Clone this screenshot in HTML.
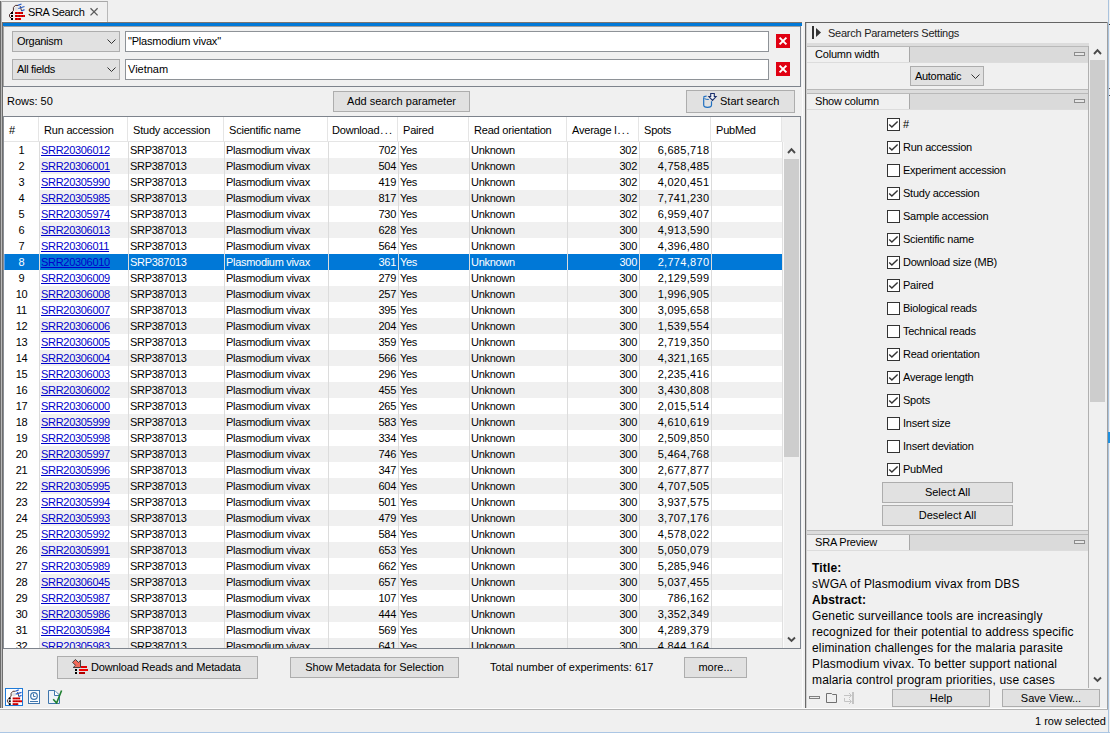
<!DOCTYPE html><html><head><meta charset="utf-8"><style>
*{margin:0;padding:0;box-sizing:border-box}
html,body{width:1110px;height:733px;overflow:hidden;background:#f0f0f0;font-family:"Liberation Sans",sans-serif;font-size:11px;color:#000;position:relative}
.a{position:absolute}
.t{position:absolute;white-space:nowrap;line-height:13px}
.btn{position:absolute;background:#e1e1e1;border:1px solid #adadad}
.btn span{position:absolute;left:0;right:0;text-align:center;white-space:nowrap}
.fld{position:absolute;background:#fff;border:1px solid #8e9297}
.combo{position:absolute;background:#e1e1e1;border:1px solid #adadad}
.row{position:absolute;left:4px;width:778px;height:16px}
.c{position:absolute;top:0;height:16px;line-height:16px;white-space:nowrap;overflow:hidden;letter-spacing:-0.3px}
.cb{position:absolute;width:13px;height:13px;border:1px solid #333;background:#fff}
.lbl{position:absolute;white-space:nowrap;line-height:13px;letter-spacing:-0.25px}
.sh{position:absolute;left:807px;width:281px;height:17px;background:#dadada;border-top:1px solid #b9b9b9;border-bottom:1px solid #dcdcdc}
.sh .nm{position:absolute;left:0;top:0;width:103px;height:15px;background:#f0f0f0;border-right:1px solid #a8a8a8}
.sh .nm span{position:absolute;left:8px;top:1px;white-space:nowrap;line-height:13px;letter-spacing:-0.2px}
.sh .mn{position:absolute;left:267px;top:5px;width:11px;height:4px;border:1px solid #8c8c8c;background:#e6e6e6}
</style></head><body>
<div class="a" style="left:0;top:1px;width:2px;height:708px;background:#6a6a6a"></div>
<div class="a" style="left:1px;top:1px;width:1px;height:708px;background:#b9b9b9"></div>
<div class="a" style="left:2px;top:1px;width:106px;height:22px;background:#f0f0f0;border-top:1px solid #a8a8a8;border-right:1px solid #b8b8b8"></div>
<div class="a" style="left:2px;top:21px;width:105px;height:1px;background:#fafafa"></div>
<svg class="a" style="left:8px;top:3px" width="18" height="18" viewBox="0 0 18 18"><defs><pattern id="rp" width="3" height="2" patternUnits="userSpaceOnUse"><rect width="3" height="2" fill="#f00000"/><rect x="1.6" width="1.4" height="2" fill="#a80000"/></pattern></defs>
<circle cx="8.4" cy="5.8" r="2.1" fill="#e2e2e2"/>
<path d="M10 2.4 H7.3 L5.4 4.5 V7.7 L1.5 11.5 V13.7 L3.5 15.4" fill="none" stroke="#4a2a2a" stroke-width="1"/>
<rect x="3" y="9" width="2" height="2" fill="#000"/><rect x="3" y="12" width="2" height="2" fill="#000"/><rect x="3" y="15" width="2" height="2" fill="#000"/>
<rect x="7" y="9" width="8" height="2" fill="url(#rp)"/>
<rect x="7" y="12" width="10" height="2" fill="url(#rp)"/>
<rect x="7" y="15" width="6" height="2" fill="url(#rp)"/>
<path d="M12.2 3.1 L13.6 8" stroke="#4a3030" stroke-width="1"/>
<path d="M10 2.4 L13.5 1 M10.3 5.5 L16.5 3.5 M13.5 8 L16.5 6.7" stroke="#2a5ec8" stroke-width="1.3"/></svg>
<div class="t" style="left:28px;top:6px;letter-spacing:-0.35px;color:#000">SRA Search</div>
<svg class="a" style="left:89px;top:7px" width="10" height="10" viewBox="0 0 10 10"><path d="M1.5 1.3 L8.6 8.4 M8.6 1.3 L1.5 8.4" stroke="#5a5a5a" stroke-width="1.3"/></svg>
<div class="a" style="left:2px;top:22px;width:800px;height:1px;background:#7a7470"></div>
<div class="a" style="left:3px;top:23px;width:799px;height:3px;background:#0078d7"></div>
<div class="a" style="left:2px;top:22px;width:1px;height:687px;background:#6e6e6e"></div>
<div class="a" style="left:3px;top:26px;width:1px;height:61px;background:#a6a6a6"></div>
<div class="a" style="left:800px;top:26px;width:1px;height:61px;background:#7d858f"></div>
<div class="a" style="left:800px;top:116px;width:1px;height:533px;background:#7d858f"></div>
<div class="a" style="left:802px;top:26px;width:1px;height:682px;background:#fbfbfb"></div>
<div class="a" style="left:4px;top:26px;width:796px;height:1px;background:#a0a0a0"></div>
<div class="a" style="left:3px;top:86px;width:798px;height:1px;background:#7d838c"></div>
<div class="combo" style="left:12px;top:31px;width:108px;height:21px"></div><div class="t" style="left:17px;top:35px;letter-spacing:-0.3px">Organism</div><svg class="a" style="left:107px;top:39px" width="9" height="6" viewBox="0 0 9 6"><path d="M0.5 0.5 L4.5 4.5 L8.5 0.5" fill="none" stroke="#333" stroke-width="1"/></svg>
<div class="fld" style="left:125px;top:31px;width:644px;height:21px"></div>
<div class="t" style="left:128px;top:35px;letter-spacing:-0.2px">"Plasmodium vivax"</div>
<div class="combo" style="left:12px;top:59px;width:108px;height:21px"></div><div class="t" style="left:17px;top:63px;letter-spacing:-0.3px">All fields</div><svg class="a" style="left:107px;top:67px" width="9" height="6" viewBox="0 0 9 6"><path d="M0.5 0.5 L4.5 4.5 L8.5 0.5" fill="none" stroke="#333" stroke-width="1"/></svg>
<div class="fld" style="left:125px;top:59px;width:644px;height:21px"></div>
<div class="t" style="left:128px;top:63px">Vietnam</div>
<svg class="a" style="left:776px;top:34px" width="14" height="14" viewBox="0 0 14 14"><rect width="14" height="14" fill="#e00012"/><path d="M3.6 3.6 L10.4 10.4 M10.4 3.6 L3.6 10.4" stroke="#fff" stroke-width="2"/></svg>
<svg class="a" style="left:776px;top:62px" width="14" height="14" viewBox="0 0 14 14"><rect width="14" height="14" fill="#e00012"/><path d="M3.6 3.6 L10.4 10.4 M10.4 3.6 L3.6 10.4" stroke="#fff" stroke-width="2"/></svg>
<div class="t" style="left:7px;top:95px">Rows: 50</div>
<div class="btn" style="left:333px;top:91px;width:137px;height:21px"><span style="top:3px">Add search parameter</span></div>
<div class="btn" style="left:686px;top:90px;width:109px;height:23px"><span style="top:4px;left:33px;text-align:left">Start search</span></div>
<svg class="a" style="left:702px;top:93px" width="16" height="16" viewBox="0 0 16 16">
<path d="M1.7 4.5 V12 Q1.7 14.3 5.5 14.3 Q9.5 14.3 9.5 12 V8.2" fill="none" stroke="#1f6fc0" stroke-width="1.2"/>
<path d="M1.7 4.5 Q1.7 3.2 4.6 3.2" fill="none" stroke="#1f6fc0" stroke-width="1.2"/>
<path d="M2.5 5.6 Q3.6 6.5 6.8 6.5" fill="none" stroke="#1f6fc0" stroke-width="1"/>
<path d="M8.7 0.5 H12.3 V3.5 H14.1 L10.5 7.4 L6.9 3.5 H8.7 Z" fill="#eef0f4" stroke="#1a2e6c" stroke-width="1.1"/>
</svg>
<div class="a" style="left:3px;top:116px;width:798px;height:1px;background:#7d838c"></div>
<div class="a" style="left:3px;top:116px;width:1px;height:533px;background:#8a8f96"></div>
<div class="a" style="left:3px;top:648px;width:798px;height:1px;background:#7d838c"></div>
<div class="a" style="left:4px;top:117px;width:778px;height:25px;background:#fff"></div>
<div class="t" style="left:9px;top:124px;letter-spacing:-0.2px">#</div>
<div class="t" style="left:44px;top:124px;letter-spacing:-0.2px">Run accession</div>
<div class="t" style="left:133px;top:124px;letter-spacing:-0.2px">Study accession</div>
<div class="t" style="left:229px;top:124px;letter-spacing:-0.2px">Scientific name</div>
<div class="t" style="left:332px;top:124px;letter-spacing:-0.2px">Download<span style='letter-spacing:1.3px;margin-left:1px'>...</span></div>
<div class="t" style="left:403px;top:124px;letter-spacing:-0.2px">Paired</div>
<div class="t" style="left:474px;top:124px;letter-spacing:-0.2px">Read orientation</div>
<div class="t" style="left:572px;top:124px;letter-spacing:-0.2px">Average l<span style='letter-spacing:1.3px;margin-left:1px'>...</span></div>
<div class="t" style="left:644px;top:124px;letter-spacing:-0.2px">Spots</div>
<div class="t" style="left:716px;top:124px;letter-spacing:-0.2px">PubMed</div>
<div class="a" style="left:38px;top:117px;width:1px;height:24px;background:#e5e5e5"></div>
<div class="a" style="left:127px;top:117px;width:1px;height:24px;background:#e5e5e5"></div>
<div class="a" style="left:223px;top:117px;width:1px;height:24px;background:#e5e5e5"></div>
<div class="a" style="left:327px;top:117px;width:1px;height:24px;background:#e5e5e5"></div>
<div class="a" style="left:397px;top:117px;width:1px;height:24px;background:#e5e5e5"></div>
<div class="a" style="left:468px;top:117px;width:1px;height:24px;background:#e5e5e5"></div>
<div class="a" style="left:566px;top:117px;width:1px;height:24px;background:#e5e5e5"></div>
<div class="a" style="left:638px;top:117px;width:1px;height:24px;background:#e5e5e5"></div>
<div class="a" style="left:710px;top:117px;width:1px;height:24px;background:#e5e5e5"></div>
<div class="a" style="left:781px;top:117px;width:1px;height:24px;background:#e5e5e5"></div>
<div class="a" style="left:4px;top:141px;width:778px;height:1px;background:#e5e5e5"></div>
<div class="a" style="left:4px;top:142px;width:778px;height:506px;overflow:hidden">
<div class="row" style="left:0;top:0px;background:#fff;color:#000">
<div class="a" style="left:0;top:0;width:35px;height:16px;background:#fff"></div>
<div class="c" style="left:0px;width:35px;text-align:center">1</div>
<div class="c" style="left:36px;width:88px;padding-left:1px"><u style="color:#0000cc">SRR20306012</u></div>
<div class="c" style="left:125px;width:95px;padding-left:1px">SRP387013</div>
<div class="c" style="left:221px;width:103px;padding-left:1px">Plasmodium vivax</div>
<div class="c" style="left:325px;width:69px;text-align:right;padding-right:2px">702</div>
<div class="c" style="left:395px;width:70px;padding-left:1px">Yes</div>
<div class="c" style="left:466px;width:97px;padding-left:1px">Unknown</div>
<div class="c" style="left:564px;width:71px;text-align:right;padding-right:2px">302</div>
<div class="c" style="left:636px;width:71px;text-align:right;padding-right:2px;letter-spacing:0.3px;padding-right:1.7px">6,685,718</div>
</div>
<div class="row" style="left:0;top:16px;background:#f0f0f0;color:#000">
<div class="a" style="left:0;top:0;width:35px;height:16px;background:#fff"></div>
<div class="c" style="left:0px;width:35px;text-align:center">2</div>
<div class="c" style="left:36px;width:88px;padding-left:1px"><u style="color:#0000cc">SRR20306001</u></div>
<div class="c" style="left:125px;width:95px;padding-left:1px">SRP387013</div>
<div class="c" style="left:221px;width:103px;padding-left:1px">Plasmodium vivax</div>
<div class="c" style="left:325px;width:69px;text-align:right;padding-right:2px">504</div>
<div class="c" style="left:395px;width:70px;padding-left:1px">Yes</div>
<div class="c" style="left:466px;width:97px;padding-left:1px">Unknown</div>
<div class="c" style="left:564px;width:71px;text-align:right;padding-right:2px">302</div>
<div class="c" style="left:636px;width:71px;text-align:right;padding-right:2px;letter-spacing:0.3px;padding-right:1.7px">4,758,485</div>
</div>
<div class="row" style="left:0;top:32px;background:#fff;color:#000">
<div class="a" style="left:0;top:0;width:35px;height:16px;background:#fff"></div>
<div class="c" style="left:0px;width:35px;text-align:center">3</div>
<div class="c" style="left:36px;width:88px;padding-left:1px"><u style="color:#0000cc">SRR20305990</u></div>
<div class="c" style="left:125px;width:95px;padding-left:1px">SRP387013</div>
<div class="c" style="left:221px;width:103px;padding-left:1px">Plasmodium vivax</div>
<div class="c" style="left:325px;width:69px;text-align:right;padding-right:2px">419</div>
<div class="c" style="left:395px;width:70px;padding-left:1px">Yes</div>
<div class="c" style="left:466px;width:97px;padding-left:1px">Unknown</div>
<div class="c" style="left:564px;width:71px;text-align:right;padding-right:2px">302</div>
<div class="c" style="left:636px;width:71px;text-align:right;padding-right:2px;letter-spacing:0.3px;padding-right:1.7px">4,020,451</div>
</div>
<div class="row" style="left:0;top:48px;background:#f0f0f0;color:#000">
<div class="a" style="left:0;top:0;width:35px;height:16px;background:#fff"></div>
<div class="c" style="left:0px;width:35px;text-align:center">4</div>
<div class="c" style="left:36px;width:88px;padding-left:1px"><u style="color:#0000cc">SRR20305985</u></div>
<div class="c" style="left:125px;width:95px;padding-left:1px">SRP387013</div>
<div class="c" style="left:221px;width:103px;padding-left:1px">Plasmodium vivax</div>
<div class="c" style="left:325px;width:69px;text-align:right;padding-right:2px">817</div>
<div class="c" style="left:395px;width:70px;padding-left:1px">Yes</div>
<div class="c" style="left:466px;width:97px;padding-left:1px">Unknown</div>
<div class="c" style="left:564px;width:71px;text-align:right;padding-right:2px">302</div>
<div class="c" style="left:636px;width:71px;text-align:right;padding-right:2px;letter-spacing:0.3px;padding-right:1.7px">7,741,230</div>
</div>
<div class="row" style="left:0;top:64px;background:#fff;color:#000">
<div class="a" style="left:0;top:0;width:35px;height:16px;background:#fff"></div>
<div class="c" style="left:0px;width:35px;text-align:center">5</div>
<div class="c" style="left:36px;width:88px;padding-left:1px"><u style="color:#0000cc">SRR20305974</u></div>
<div class="c" style="left:125px;width:95px;padding-left:1px">SRP387013</div>
<div class="c" style="left:221px;width:103px;padding-left:1px">Plasmodium vivax</div>
<div class="c" style="left:325px;width:69px;text-align:right;padding-right:2px">730</div>
<div class="c" style="left:395px;width:70px;padding-left:1px">Yes</div>
<div class="c" style="left:466px;width:97px;padding-left:1px">Unknown</div>
<div class="c" style="left:564px;width:71px;text-align:right;padding-right:2px">302</div>
<div class="c" style="left:636px;width:71px;text-align:right;padding-right:2px;letter-spacing:0.3px;padding-right:1.7px">6,959,407</div>
</div>
<div class="row" style="left:0;top:80px;background:#f0f0f0;color:#000">
<div class="a" style="left:0;top:0;width:35px;height:16px;background:#fff"></div>
<div class="c" style="left:0px;width:35px;text-align:center">6</div>
<div class="c" style="left:36px;width:88px;padding-left:1px"><u style="color:#0000cc">SRR20306013</u></div>
<div class="c" style="left:125px;width:95px;padding-left:1px">SRP387013</div>
<div class="c" style="left:221px;width:103px;padding-left:1px">Plasmodium vivax</div>
<div class="c" style="left:325px;width:69px;text-align:right;padding-right:2px">628</div>
<div class="c" style="left:395px;width:70px;padding-left:1px">Yes</div>
<div class="c" style="left:466px;width:97px;padding-left:1px">Unknown</div>
<div class="c" style="left:564px;width:71px;text-align:right;padding-right:2px">300</div>
<div class="c" style="left:636px;width:71px;text-align:right;padding-right:2px;letter-spacing:0.3px;padding-right:1.7px">4,913,590</div>
</div>
<div class="row" style="left:0;top:96px;background:#fff;color:#000">
<div class="a" style="left:0;top:0;width:35px;height:16px;background:#fff"></div>
<div class="c" style="left:0px;width:35px;text-align:center">7</div>
<div class="c" style="left:36px;width:88px;padding-left:1px"><u style="color:#0000cc">SRR20306011</u></div>
<div class="c" style="left:125px;width:95px;padding-left:1px">SRP387013</div>
<div class="c" style="left:221px;width:103px;padding-left:1px">Plasmodium vivax</div>
<div class="c" style="left:325px;width:69px;text-align:right;padding-right:2px">564</div>
<div class="c" style="left:395px;width:70px;padding-left:1px">Yes</div>
<div class="c" style="left:466px;width:97px;padding-left:1px">Unknown</div>
<div class="c" style="left:564px;width:71px;text-align:right;padding-right:2px">300</div>
<div class="c" style="left:636px;width:71px;text-align:right;padding-right:2px;letter-spacing:0.3px;padding-right:1.7px">4,396,480</div>
</div>
<div class="row" style="left:0;top:112px;background:#0078d7;color:#fff">
<div class="c" style="left:0px;width:35px;text-align:center">8</div>
<div class="c" style="left:36px;width:88px;padding-left:1px"><u style="color:#0000cc">SRR20306010</u></div>
<div class="c" style="left:125px;width:95px;padding-left:1px">SRP387013</div>
<div class="c" style="left:221px;width:103px;padding-left:1px">Plasmodium vivax</div>
<div class="c" style="left:325px;width:69px;text-align:right;padding-right:2px">361</div>
<div class="c" style="left:395px;width:70px;padding-left:1px">Yes</div>
<div class="c" style="left:466px;width:97px;padding-left:1px">Unknown</div>
<div class="c" style="left:564px;width:71px;text-align:right;padding-right:2px">300</div>
<div class="c" style="left:636px;width:71px;text-align:right;padding-right:2px;letter-spacing:0.3px;padding-right:1.7px">2,774,870</div>
</div>
<div class="row" style="left:0;top:128px;background:#fff;color:#000">
<div class="a" style="left:0;top:0;width:35px;height:16px;background:#fff"></div>
<div class="c" style="left:0px;width:35px;text-align:center">9</div>
<div class="c" style="left:36px;width:88px;padding-left:1px"><u style="color:#0000cc">SRR20306009</u></div>
<div class="c" style="left:125px;width:95px;padding-left:1px">SRP387013</div>
<div class="c" style="left:221px;width:103px;padding-left:1px">Plasmodium vivax</div>
<div class="c" style="left:325px;width:69px;text-align:right;padding-right:2px">279</div>
<div class="c" style="left:395px;width:70px;padding-left:1px">Yes</div>
<div class="c" style="left:466px;width:97px;padding-left:1px">Unknown</div>
<div class="c" style="left:564px;width:71px;text-align:right;padding-right:2px">300</div>
<div class="c" style="left:636px;width:71px;text-align:right;padding-right:2px;letter-spacing:0.3px;padding-right:1.7px">2,129,599</div>
</div>
<div class="row" style="left:0;top:144px;background:#f0f0f0;color:#000">
<div class="a" style="left:0;top:0;width:35px;height:16px;background:#fff"></div>
<div class="c" style="left:0px;width:35px;text-align:center">10</div>
<div class="c" style="left:36px;width:88px;padding-left:1px"><u style="color:#0000cc">SRR20306008</u></div>
<div class="c" style="left:125px;width:95px;padding-left:1px">SRP387013</div>
<div class="c" style="left:221px;width:103px;padding-left:1px">Plasmodium vivax</div>
<div class="c" style="left:325px;width:69px;text-align:right;padding-right:2px">257</div>
<div class="c" style="left:395px;width:70px;padding-left:1px">Yes</div>
<div class="c" style="left:466px;width:97px;padding-left:1px">Unknown</div>
<div class="c" style="left:564px;width:71px;text-align:right;padding-right:2px">300</div>
<div class="c" style="left:636px;width:71px;text-align:right;padding-right:2px;letter-spacing:0.3px;padding-right:1.7px">1,996,905</div>
</div>
<div class="row" style="left:0;top:160px;background:#fff;color:#000">
<div class="a" style="left:0;top:0;width:35px;height:16px;background:#fff"></div>
<div class="c" style="left:0px;width:35px;text-align:center">11</div>
<div class="c" style="left:36px;width:88px;padding-left:1px"><u style="color:#0000cc">SRR20306007</u></div>
<div class="c" style="left:125px;width:95px;padding-left:1px">SRP387013</div>
<div class="c" style="left:221px;width:103px;padding-left:1px">Plasmodium vivax</div>
<div class="c" style="left:325px;width:69px;text-align:right;padding-right:2px">395</div>
<div class="c" style="left:395px;width:70px;padding-left:1px">Yes</div>
<div class="c" style="left:466px;width:97px;padding-left:1px">Unknown</div>
<div class="c" style="left:564px;width:71px;text-align:right;padding-right:2px">300</div>
<div class="c" style="left:636px;width:71px;text-align:right;padding-right:2px;letter-spacing:0.3px;padding-right:1.7px">3,095,658</div>
</div>
<div class="row" style="left:0;top:176px;background:#f0f0f0;color:#000">
<div class="a" style="left:0;top:0;width:35px;height:16px;background:#fff"></div>
<div class="c" style="left:0px;width:35px;text-align:center">12</div>
<div class="c" style="left:36px;width:88px;padding-left:1px"><u style="color:#0000cc">SRR20306006</u></div>
<div class="c" style="left:125px;width:95px;padding-left:1px">SRP387013</div>
<div class="c" style="left:221px;width:103px;padding-left:1px">Plasmodium vivax</div>
<div class="c" style="left:325px;width:69px;text-align:right;padding-right:2px">204</div>
<div class="c" style="left:395px;width:70px;padding-left:1px">Yes</div>
<div class="c" style="left:466px;width:97px;padding-left:1px">Unknown</div>
<div class="c" style="left:564px;width:71px;text-align:right;padding-right:2px">300</div>
<div class="c" style="left:636px;width:71px;text-align:right;padding-right:2px;letter-spacing:0.3px;padding-right:1.7px">1,539,554</div>
</div>
<div class="row" style="left:0;top:192px;background:#fff;color:#000">
<div class="a" style="left:0;top:0;width:35px;height:16px;background:#fff"></div>
<div class="c" style="left:0px;width:35px;text-align:center">13</div>
<div class="c" style="left:36px;width:88px;padding-left:1px"><u style="color:#0000cc">SRR20306005</u></div>
<div class="c" style="left:125px;width:95px;padding-left:1px">SRP387013</div>
<div class="c" style="left:221px;width:103px;padding-left:1px">Plasmodium vivax</div>
<div class="c" style="left:325px;width:69px;text-align:right;padding-right:2px">359</div>
<div class="c" style="left:395px;width:70px;padding-left:1px">Yes</div>
<div class="c" style="left:466px;width:97px;padding-left:1px">Unknown</div>
<div class="c" style="left:564px;width:71px;text-align:right;padding-right:2px">300</div>
<div class="c" style="left:636px;width:71px;text-align:right;padding-right:2px;letter-spacing:0.3px;padding-right:1.7px">2,719,350</div>
</div>
<div class="row" style="left:0;top:208px;background:#f0f0f0;color:#000">
<div class="a" style="left:0;top:0;width:35px;height:16px;background:#fff"></div>
<div class="c" style="left:0px;width:35px;text-align:center">14</div>
<div class="c" style="left:36px;width:88px;padding-left:1px"><u style="color:#0000cc">SRR20306004</u></div>
<div class="c" style="left:125px;width:95px;padding-left:1px">SRP387013</div>
<div class="c" style="left:221px;width:103px;padding-left:1px">Plasmodium vivax</div>
<div class="c" style="left:325px;width:69px;text-align:right;padding-right:2px">566</div>
<div class="c" style="left:395px;width:70px;padding-left:1px">Yes</div>
<div class="c" style="left:466px;width:97px;padding-left:1px">Unknown</div>
<div class="c" style="left:564px;width:71px;text-align:right;padding-right:2px">300</div>
<div class="c" style="left:636px;width:71px;text-align:right;padding-right:2px;letter-spacing:0.3px;padding-right:1.7px">4,321,165</div>
</div>
<div class="row" style="left:0;top:224px;background:#fff;color:#000">
<div class="a" style="left:0;top:0;width:35px;height:16px;background:#fff"></div>
<div class="c" style="left:0px;width:35px;text-align:center">15</div>
<div class="c" style="left:36px;width:88px;padding-left:1px"><u style="color:#0000cc">SRR20306003</u></div>
<div class="c" style="left:125px;width:95px;padding-left:1px">SRP387013</div>
<div class="c" style="left:221px;width:103px;padding-left:1px">Plasmodium vivax</div>
<div class="c" style="left:325px;width:69px;text-align:right;padding-right:2px">296</div>
<div class="c" style="left:395px;width:70px;padding-left:1px">Yes</div>
<div class="c" style="left:466px;width:97px;padding-left:1px">Unknown</div>
<div class="c" style="left:564px;width:71px;text-align:right;padding-right:2px">300</div>
<div class="c" style="left:636px;width:71px;text-align:right;padding-right:2px;letter-spacing:0.3px;padding-right:1.7px">2,235,416</div>
</div>
<div class="row" style="left:0;top:240px;background:#f0f0f0;color:#000">
<div class="a" style="left:0;top:0;width:35px;height:16px;background:#fff"></div>
<div class="c" style="left:0px;width:35px;text-align:center">16</div>
<div class="c" style="left:36px;width:88px;padding-left:1px"><u style="color:#0000cc">SRR20306002</u></div>
<div class="c" style="left:125px;width:95px;padding-left:1px">SRP387013</div>
<div class="c" style="left:221px;width:103px;padding-left:1px">Plasmodium vivax</div>
<div class="c" style="left:325px;width:69px;text-align:right;padding-right:2px">455</div>
<div class="c" style="left:395px;width:70px;padding-left:1px">Yes</div>
<div class="c" style="left:466px;width:97px;padding-left:1px">Unknown</div>
<div class="c" style="left:564px;width:71px;text-align:right;padding-right:2px">300</div>
<div class="c" style="left:636px;width:71px;text-align:right;padding-right:2px;letter-spacing:0.3px;padding-right:1.7px">3,430,808</div>
</div>
<div class="row" style="left:0;top:256px;background:#fff;color:#000">
<div class="a" style="left:0;top:0;width:35px;height:16px;background:#fff"></div>
<div class="c" style="left:0px;width:35px;text-align:center">17</div>
<div class="c" style="left:36px;width:88px;padding-left:1px"><u style="color:#0000cc">SRR20306000</u></div>
<div class="c" style="left:125px;width:95px;padding-left:1px">SRP387013</div>
<div class="c" style="left:221px;width:103px;padding-left:1px">Plasmodium vivax</div>
<div class="c" style="left:325px;width:69px;text-align:right;padding-right:2px">265</div>
<div class="c" style="left:395px;width:70px;padding-left:1px">Yes</div>
<div class="c" style="left:466px;width:97px;padding-left:1px">Unknown</div>
<div class="c" style="left:564px;width:71px;text-align:right;padding-right:2px">300</div>
<div class="c" style="left:636px;width:71px;text-align:right;padding-right:2px;letter-spacing:0.3px;padding-right:1.7px">2,015,514</div>
</div>
<div class="row" style="left:0;top:272px;background:#f0f0f0;color:#000">
<div class="a" style="left:0;top:0;width:35px;height:16px;background:#fff"></div>
<div class="c" style="left:0px;width:35px;text-align:center">18</div>
<div class="c" style="left:36px;width:88px;padding-left:1px"><u style="color:#0000cc">SRR20305999</u></div>
<div class="c" style="left:125px;width:95px;padding-left:1px">SRP387013</div>
<div class="c" style="left:221px;width:103px;padding-left:1px">Plasmodium vivax</div>
<div class="c" style="left:325px;width:69px;text-align:right;padding-right:2px">583</div>
<div class="c" style="left:395px;width:70px;padding-left:1px">Yes</div>
<div class="c" style="left:466px;width:97px;padding-left:1px">Unknown</div>
<div class="c" style="left:564px;width:71px;text-align:right;padding-right:2px">300</div>
<div class="c" style="left:636px;width:71px;text-align:right;padding-right:2px;letter-spacing:0.3px;padding-right:1.7px">4,610,619</div>
</div>
<div class="row" style="left:0;top:288px;background:#fff;color:#000">
<div class="a" style="left:0;top:0;width:35px;height:16px;background:#fff"></div>
<div class="c" style="left:0px;width:35px;text-align:center">19</div>
<div class="c" style="left:36px;width:88px;padding-left:1px"><u style="color:#0000cc">SRR20305998</u></div>
<div class="c" style="left:125px;width:95px;padding-left:1px">SRP387013</div>
<div class="c" style="left:221px;width:103px;padding-left:1px">Plasmodium vivax</div>
<div class="c" style="left:325px;width:69px;text-align:right;padding-right:2px">334</div>
<div class="c" style="left:395px;width:70px;padding-left:1px">Yes</div>
<div class="c" style="left:466px;width:97px;padding-left:1px">Unknown</div>
<div class="c" style="left:564px;width:71px;text-align:right;padding-right:2px">300</div>
<div class="c" style="left:636px;width:71px;text-align:right;padding-right:2px;letter-spacing:0.3px;padding-right:1.7px">2,509,850</div>
</div>
<div class="row" style="left:0;top:304px;background:#f0f0f0;color:#000">
<div class="a" style="left:0;top:0;width:35px;height:16px;background:#fff"></div>
<div class="c" style="left:0px;width:35px;text-align:center">20</div>
<div class="c" style="left:36px;width:88px;padding-left:1px"><u style="color:#0000cc">SRR20305997</u></div>
<div class="c" style="left:125px;width:95px;padding-left:1px">SRP387013</div>
<div class="c" style="left:221px;width:103px;padding-left:1px">Plasmodium vivax</div>
<div class="c" style="left:325px;width:69px;text-align:right;padding-right:2px">746</div>
<div class="c" style="left:395px;width:70px;padding-left:1px">Yes</div>
<div class="c" style="left:466px;width:97px;padding-left:1px">Unknown</div>
<div class="c" style="left:564px;width:71px;text-align:right;padding-right:2px">300</div>
<div class="c" style="left:636px;width:71px;text-align:right;padding-right:2px;letter-spacing:0.3px;padding-right:1.7px">5,464,768</div>
</div>
<div class="row" style="left:0;top:320px;background:#fff;color:#000">
<div class="a" style="left:0;top:0;width:35px;height:16px;background:#fff"></div>
<div class="c" style="left:0px;width:35px;text-align:center">21</div>
<div class="c" style="left:36px;width:88px;padding-left:1px"><u style="color:#0000cc">SRR20305996</u></div>
<div class="c" style="left:125px;width:95px;padding-left:1px">SRP387013</div>
<div class="c" style="left:221px;width:103px;padding-left:1px">Plasmodium vivax</div>
<div class="c" style="left:325px;width:69px;text-align:right;padding-right:2px">347</div>
<div class="c" style="left:395px;width:70px;padding-left:1px">Yes</div>
<div class="c" style="left:466px;width:97px;padding-left:1px">Unknown</div>
<div class="c" style="left:564px;width:71px;text-align:right;padding-right:2px">300</div>
<div class="c" style="left:636px;width:71px;text-align:right;padding-right:2px;letter-spacing:0.3px;padding-right:1.7px">2,677,877</div>
</div>
<div class="row" style="left:0;top:336px;background:#f0f0f0;color:#000">
<div class="a" style="left:0;top:0;width:35px;height:16px;background:#fff"></div>
<div class="c" style="left:0px;width:35px;text-align:center">22</div>
<div class="c" style="left:36px;width:88px;padding-left:1px"><u style="color:#0000cc">SRR20305995</u></div>
<div class="c" style="left:125px;width:95px;padding-left:1px">SRP387013</div>
<div class="c" style="left:221px;width:103px;padding-left:1px">Plasmodium vivax</div>
<div class="c" style="left:325px;width:69px;text-align:right;padding-right:2px">604</div>
<div class="c" style="left:395px;width:70px;padding-left:1px">Yes</div>
<div class="c" style="left:466px;width:97px;padding-left:1px">Unknown</div>
<div class="c" style="left:564px;width:71px;text-align:right;padding-right:2px">300</div>
<div class="c" style="left:636px;width:71px;text-align:right;padding-right:2px;letter-spacing:0.3px;padding-right:1.7px">4,707,505</div>
</div>
<div class="row" style="left:0;top:352px;background:#fff;color:#000">
<div class="a" style="left:0;top:0;width:35px;height:16px;background:#fff"></div>
<div class="c" style="left:0px;width:35px;text-align:center">23</div>
<div class="c" style="left:36px;width:88px;padding-left:1px"><u style="color:#0000cc">SRR20305994</u></div>
<div class="c" style="left:125px;width:95px;padding-left:1px">SRP387013</div>
<div class="c" style="left:221px;width:103px;padding-left:1px">Plasmodium vivax</div>
<div class="c" style="left:325px;width:69px;text-align:right;padding-right:2px">501</div>
<div class="c" style="left:395px;width:70px;padding-left:1px">Yes</div>
<div class="c" style="left:466px;width:97px;padding-left:1px">Unknown</div>
<div class="c" style="left:564px;width:71px;text-align:right;padding-right:2px">300</div>
<div class="c" style="left:636px;width:71px;text-align:right;padding-right:2px;letter-spacing:0.3px;padding-right:1.7px">3,937,575</div>
</div>
<div class="row" style="left:0;top:368px;background:#f0f0f0;color:#000">
<div class="a" style="left:0;top:0;width:35px;height:16px;background:#fff"></div>
<div class="c" style="left:0px;width:35px;text-align:center">24</div>
<div class="c" style="left:36px;width:88px;padding-left:1px"><u style="color:#0000cc">SRR20305993</u></div>
<div class="c" style="left:125px;width:95px;padding-left:1px">SRP387013</div>
<div class="c" style="left:221px;width:103px;padding-left:1px">Plasmodium vivax</div>
<div class="c" style="left:325px;width:69px;text-align:right;padding-right:2px">479</div>
<div class="c" style="left:395px;width:70px;padding-left:1px">Yes</div>
<div class="c" style="left:466px;width:97px;padding-left:1px">Unknown</div>
<div class="c" style="left:564px;width:71px;text-align:right;padding-right:2px">300</div>
<div class="c" style="left:636px;width:71px;text-align:right;padding-right:2px;letter-spacing:0.3px;padding-right:1.7px">3,707,176</div>
</div>
<div class="row" style="left:0;top:384px;background:#fff;color:#000">
<div class="a" style="left:0;top:0;width:35px;height:16px;background:#fff"></div>
<div class="c" style="left:0px;width:35px;text-align:center">25</div>
<div class="c" style="left:36px;width:88px;padding-left:1px"><u style="color:#0000cc">SRR20305992</u></div>
<div class="c" style="left:125px;width:95px;padding-left:1px">SRP387013</div>
<div class="c" style="left:221px;width:103px;padding-left:1px">Plasmodium vivax</div>
<div class="c" style="left:325px;width:69px;text-align:right;padding-right:2px">584</div>
<div class="c" style="left:395px;width:70px;padding-left:1px">Yes</div>
<div class="c" style="left:466px;width:97px;padding-left:1px">Unknown</div>
<div class="c" style="left:564px;width:71px;text-align:right;padding-right:2px">300</div>
<div class="c" style="left:636px;width:71px;text-align:right;padding-right:2px;letter-spacing:0.3px;padding-right:1.7px">4,578,022</div>
</div>
<div class="row" style="left:0;top:400px;background:#f0f0f0;color:#000">
<div class="a" style="left:0;top:0;width:35px;height:16px;background:#fff"></div>
<div class="c" style="left:0px;width:35px;text-align:center">26</div>
<div class="c" style="left:36px;width:88px;padding-left:1px"><u style="color:#0000cc">SRR20305991</u></div>
<div class="c" style="left:125px;width:95px;padding-left:1px">SRP387013</div>
<div class="c" style="left:221px;width:103px;padding-left:1px">Plasmodium vivax</div>
<div class="c" style="left:325px;width:69px;text-align:right;padding-right:2px">653</div>
<div class="c" style="left:395px;width:70px;padding-left:1px">Yes</div>
<div class="c" style="left:466px;width:97px;padding-left:1px">Unknown</div>
<div class="c" style="left:564px;width:71px;text-align:right;padding-right:2px">300</div>
<div class="c" style="left:636px;width:71px;text-align:right;padding-right:2px;letter-spacing:0.3px;padding-right:1.7px">5,050,079</div>
</div>
<div class="row" style="left:0;top:416px;background:#fff;color:#000">
<div class="a" style="left:0;top:0;width:35px;height:16px;background:#fff"></div>
<div class="c" style="left:0px;width:35px;text-align:center">27</div>
<div class="c" style="left:36px;width:88px;padding-left:1px"><u style="color:#0000cc">SRR20305989</u></div>
<div class="c" style="left:125px;width:95px;padding-left:1px">SRP387013</div>
<div class="c" style="left:221px;width:103px;padding-left:1px">Plasmodium vivax</div>
<div class="c" style="left:325px;width:69px;text-align:right;padding-right:2px">662</div>
<div class="c" style="left:395px;width:70px;padding-left:1px">Yes</div>
<div class="c" style="left:466px;width:97px;padding-left:1px">Unknown</div>
<div class="c" style="left:564px;width:71px;text-align:right;padding-right:2px">300</div>
<div class="c" style="left:636px;width:71px;text-align:right;padding-right:2px;letter-spacing:0.3px;padding-right:1.7px">5,285,946</div>
</div>
<div class="row" style="left:0;top:432px;background:#f0f0f0;color:#000">
<div class="a" style="left:0;top:0;width:35px;height:16px;background:#fff"></div>
<div class="c" style="left:0px;width:35px;text-align:center">28</div>
<div class="c" style="left:36px;width:88px;padding-left:1px"><u style="color:#0000cc">SRR20306045</u></div>
<div class="c" style="left:125px;width:95px;padding-left:1px">SRP387013</div>
<div class="c" style="left:221px;width:103px;padding-left:1px">Plasmodium vivax</div>
<div class="c" style="left:325px;width:69px;text-align:right;padding-right:2px">657</div>
<div class="c" style="left:395px;width:70px;padding-left:1px">Yes</div>
<div class="c" style="left:466px;width:97px;padding-left:1px">Unknown</div>
<div class="c" style="left:564px;width:71px;text-align:right;padding-right:2px">300</div>
<div class="c" style="left:636px;width:71px;text-align:right;padding-right:2px;letter-spacing:0.3px;padding-right:1.7px">5,037,455</div>
</div>
<div class="row" style="left:0;top:448px;background:#fff;color:#000">
<div class="a" style="left:0;top:0;width:35px;height:16px;background:#fff"></div>
<div class="c" style="left:0px;width:35px;text-align:center">29</div>
<div class="c" style="left:36px;width:88px;padding-left:1px"><u style="color:#0000cc">SRR20305987</u></div>
<div class="c" style="left:125px;width:95px;padding-left:1px">SRP387013</div>
<div class="c" style="left:221px;width:103px;padding-left:1px">Plasmodium vivax</div>
<div class="c" style="left:325px;width:69px;text-align:right;padding-right:2px">107</div>
<div class="c" style="left:395px;width:70px;padding-left:1px">Yes</div>
<div class="c" style="left:466px;width:97px;padding-left:1px">Unknown</div>
<div class="c" style="left:564px;width:71px;text-align:right;padding-right:2px">300</div>
<div class="c" style="left:636px;width:71px;text-align:right;padding-right:2px;letter-spacing:0.3px;padding-right:1.7px">786,162</div>
</div>
<div class="row" style="left:0;top:464px;background:#f0f0f0;color:#000">
<div class="a" style="left:0;top:0;width:35px;height:16px;background:#fff"></div>
<div class="c" style="left:0px;width:35px;text-align:center">30</div>
<div class="c" style="left:36px;width:88px;padding-left:1px"><u style="color:#0000cc">SRR20305986</u></div>
<div class="c" style="left:125px;width:95px;padding-left:1px">SRP387013</div>
<div class="c" style="left:221px;width:103px;padding-left:1px">Plasmodium vivax</div>
<div class="c" style="left:325px;width:69px;text-align:right;padding-right:2px">444</div>
<div class="c" style="left:395px;width:70px;padding-left:1px">Yes</div>
<div class="c" style="left:466px;width:97px;padding-left:1px">Unknown</div>
<div class="c" style="left:564px;width:71px;text-align:right;padding-right:2px">300</div>
<div class="c" style="left:636px;width:71px;text-align:right;padding-right:2px;letter-spacing:0.3px;padding-right:1.7px">3,352,349</div>
</div>
<div class="row" style="left:0;top:480px;background:#fff;color:#000">
<div class="a" style="left:0;top:0;width:35px;height:16px;background:#fff"></div>
<div class="c" style="left:0px;width:35px;text-align:center">31</div>
<div class="c" style="left:36px;width:88px;padding-left:1px"><u style="color:#0000cc">SRR20305984</u></div>
<div class="c" style="left:125px;width:95px;padding-left:1px">SRP387013</div>
<div class="c" style="left:221px;width:103px;padding-left:1px">Plasmodium vivax</div>
<div class="c" style="left:325px;width:69px;text-align:right;padding-right:2px">569</div>
<div class="c" style="left:395px;width:70px;padding-left:1px">Yes</div>
<div class="c" style="left:466px;width:97px;padding-left:1px">Unknown</div>
<div class="c" style="left:564px;width:71px;text-align:right;padding-right:2px">300</div>
<div class="c" style="left:636px;width:71px;text-align:right;padding-right:2px;letter-spacing:0.3px;padding-right:1.7px">4,289,379</div>
</div>
<div class="row" style="left:0;top:496px;background:#f0f0f0;color:#000">
<div class="a" style="left:0;top:0;width:35px;height:16px;background:#fff"></div>
<div class="c" style="left:0px;width:35px;text-align:center">32</div>
<div class="c" style="left:36px;width:88px;padding-left:1px"><u style="color:#0000cc">SRR20305983</u></div>
<div class="c" style="left:125px;width:95px;padding-left:1px">SRP387013</div>
<div class="c" style="left:221px;width:103px;padding-left:1px">Plasmodium vivax</div>
<div class="c" style="left:325px;width:69px;text-align:right;padding-right:2px">641</div>
<div class="c" style="left:395px;width:70px;padding-left:1px">Yes</div>
<div class="c" style="left:466px;width:97px;padding-left:1px">Unknown</div>
<div class="c" style="left:564px;width:71px;text-align:right;padding-right:2px">300</div>
<div class="c" style="left:636px;width:71px;text-align:right;padding-right:2px;letter-spacing:0.3px;padding-right:1.7px">4,844,164</div>
</div>
<div class="a" style="left:35px;top:0;width:1px;height:506px;background:#dcdcdc"></div>
<div class="a" style="left:124px;top:0;width:1px;height:506px;background:#dcdcdc"></div>
<div class="a" style="left:220px;top:0;width:1px;height:506px;background:#dcdcdc"></div>
<div class="a" style="left:324px;top:0;width:1px;height:506px;background:#dcdcdc"></div>
<div class="a" style="left:394px;top:0;width:1px;height:506px;background:#dcdcdc"></div>
<div class="a" style="left:465px;top:0;width:1px;height:506px;background:#dcdcdc"></div>
<div class="a" style="left:563px;top:0;width:1px;height:506px;background:#dcdcdc"></div>
<div class="a" style="left:635px;top:0;width:1px;height:506px;background:#dcdcdc"></div>
<div class="a" style="left:707px;top:0;width:1px;height:506px;background:#dcdcdc"></div>
<div class="a" style="left:778px;top:0;width:1px;height:506px;background:#dcdcdc"></div>
<div class="a" style="left:0px;top:112px;width:1px;height:16px;background:#5aa0e6"></div>
</div>
<div class="a" style="left:782px;top:142px;width:18px;height:506px;background:#f0f0f0;border-left:1px solid #e0e0e0"></div>
<div class="a" style="left:783px;top:142px;width:1px;height:506px;background:#fafafa"></div>
<div class="a" style="left:784px;top:159px;width:15px;height:298px;background:#cdcdcd"></div>
<svg class="a" style="left:787px;top:147px" width="9" height="7" viewBox="0 0 9 7"><path d="M1 6 L4.5 2.2 L8 6" fill="none" stroke="#4a4a4a" stroke-width="1.9"/></svg>
<svg class="a" style="left:787px;top:636px" width="9" height="7" viewBox="0 0 9 7"><path d="M1 1.5 L4.5 5 L8 1.5" fill="none" stroke="#4a4a4a" stroke-width="1.9"/></svg>
<div class="btn" style="left:57px;top:656px;width:201px;height:23px"><span style="top:4px;left:33px;text-align:left;letter-spacing:-0.16px">Download Reads and Metadata</span></div>
<svg class="a" style="left:72px;top:659px" width="18" height="17" viewBox="0 0 18 17">
<path d="M3.5 0.5 L6.5 3.5 L8.5 1.3 V8.5 H1.2 L3.5 6.3 L0.5 3.3 Z" fill="#f26b5b" stroke="#333" stroke-width="0.9"/>
<rect x="9" y="7" width="6" height="2" fill="#e00000"/><rect x="7" y="10" width="9" height="2" fill="#f00000"/><rect x="7" y="13" width="6" height="2" fill="#b00000"/>
<rect x="3" y="10" width="2" height="2" fill="#000"/><rect x="3" y="13" width="2" height="2" fill="#000"/>
</svg>
<div class="btn" style="left:290px;top:657px;width:169px;height:21px"><span style="top:3px;letter-spacing:-0.07px">Show Metadata for Selection</span></div>
<div class="t" style="left:490px;top:661px">Total number of experiments: 617</div>
<div class="btn" style="left:684px;top:657px;width:63px;height:21px"><span style="top:3px">more...</span></div>
<div class="a" style="left:5px;top:688px;width:18px;height:18px;border:1px solid #1e7ad8;background:#fff"></div>
<svg class="a" style="left:6px;top:689px" width="17" height="17" viewBox="0 0 18 18"><defs><pattern id="rp" width="3" height="2" patternUnits="userSpaceOnUse"><rect width="3" height="2" fill="#f00000"/><rect x="1.6" width="1.4" height="2" fill="#a80000"/></pattern></defs>
<circle cx="8.4" cy="5.8" r="2.1" fill="#e2e2e2"/>
<path d="M10 2.4 H7.3 L5.4 4.5 V7.7 L1.5 11.5 V13.7 L3.5 15.4" fill="none" stroke="#4a2a2a" stroke-width="1"/>
<rect x="3" y="9" width="2" height="2" fill="#000"/><rect x="3" y="12" width="2" height="2" fill="#000"/><rect x="3" y="15" width="2" height="2" fill="#000"/>
<rect x="7" y="9" width="8" height="2" fill="url(#rp)"/>
<rect x="7" y="12" width="10" height="2" fill="url(#rp)"/>
<rect x="7" y="15" width="6" height="2" fill="url(#rp)"/>
<path d="M12.2 3.1 L13.6 8" stroke="#4a3030" stroke-width="1"/>
<path d="M10 2.4 L13.5 1 M10.3 5.5 L16.5 3.5 M13.5 8 L16.5 6.7" stroke="#2a5ec8" stroke-width="1.3"/></svg>
<svg class="a" style="left:28px;top:690px" width="12" height="14" viewBox="0 0 12 14">
<rect x="0.5" y="0.5" width="11" height="13" fill="#fafcfe" stroke="#3f76ad" stroke-width="1"/>
<circle cx="6" cy="6" r="3.3" fill="none" stroke="#3f76ad" stroke-width="1.2"/>
<path d="M5.5 3.8 V6.5 H7.6" fill="none" stroke="#3f76ad" stroke-width="1"/>
<path d="M2 11.5 H10" stroke="#3f76ad" stroke-width="1"/>
</svg>
<svg class="a" style="left:48px;top:690px" width="15" height="14" viewBox="0 0 15 14">
<path d="M0.5 0.5 H6.5 L11.5 5 V13.5 H0.5 Z" fill="#eef3f9" stroke="#3f76ad" stroke-width="1"/>
<path d="M6.5 0.5 V5.5 H11" fill="#fff" stroke="#3f76ad" stroke-width="1"/>
<path d="M5.2 9.2 L8.6 13 L13.6 0.5" fill="none" stroke="#1e8030" stroke-width="1.6"/>
</svg>
<div class="a" style="left:0;top:708px;width:1108px;height:1px;background:#fdfdfd"></div>
<div class="a" style="left:0;top:709px;width:1108px;height:1px;background:#b4b4b4"></div>
<div class="a" style="left:0;top:732px;width:1110px;height:1px;background:#abc6e4"></div>
<div class="t" style="left:1035px;top:715px">1 row selected</div>
<div class="a" style="left:805px;top:22px;width:2px;height:686px;background:#6a6a6a"></div>
<div class="a" style="left:806px;top:23px;width:1px;height:685px;background:#cfcfcf"></div>
<div class="a" style="left:805px;top:22px;width:302px;height:1px;background:#646464"></div>
<div class="a" style="left:1107px;top:22px;width:1px;height:687px;background:#a0a0a0"></div>
<div class="a" style="left:1108px;top:0;width:1px;height:733px;background:#a9c3de"></div>
<svg class="a" style="left:812px;top:26px" width="10" height="13" viewBox="0 0 10 13"><rect x="0" y="0" width="2" height="13" fill="#333"/><path d="M4 2 L9 6.5 L4 11 Z" fill="#333"/></svg>
<div class="t" style="left:828px;top:27px;letter-spacing:-0.25px;color:#222">Search Parameters Settings</div>
<div class="a" style="left:807px;top:43px;width:282px;height:3px;background:#dcdcdc"></div>
<div class="a" style="left:1088px;top:46px;width:1px;height:642px;background:#b0b0b0"></div>
<div class="sh" style="top:46px"><div class="nm"><span>Column width</span></div><div class="mn"></div></div>
<div class="combo" style="left:910px;top:66px;width:74px;height:20px"></div><div class="t" style="left:915px;top:70px;letter-spacing:-0.3px">Automatic</div><svg class="a" style="left:971px;top:74px" width="9" height="6" viewBox="0 0 9 6"><path d="M0.5 0.5 L4.5 4.5 L8.5 0.5" fill="none" stroke="#333" stroke-width="1"/></svg>
<div class="a" style="left:807px;top:89px;width:281px;height:4px;background:#dcdcdc;border-top:1px solid #b9b9b9"></div>
<div class="sh" style="top:93px"><div class="nm"><span>Show column</span></div><div class="mn"></div></div>
<div class="cb" style="left:887px;top:118px"></div>
<svg class="a" style="left:887px;top:118px" width="13" height="13" viewBox="0 0 13 13"><path d="M2.2 6.4 L4.9 9.1 L10.6 3.4" fill="none" stroke="#333" stroke-width="1.4"/></svg>
<div class="lbl" style="left:903px;top:118px">#</div>
<div class="cb" style="left:887px;top:141px"></div>
<svg class="a" style="left:887px;top:141px" width="13" height="13" viewBox="0 0 13 13"><path d="M2.2 6.4 L4.9 9.1 L10.6 3.4" fill="none" stroke="#333" stroke-width="1.4"/></svg>
<div class="lbl" style="left:903px;top:141px">Run accession</div>
<div class="cb" style="left:887px;top:164px"></div>
<div class="lbl" style="left:903px;top:164px">Experiment accession</div>
<div class="cb" style="left:887px;top:187px"></div>
<svg class="a" style="left:887px;top:187px" width="13" height="13" viewBox="0 0 13 13"><path d="M2.2 6.4 L4.9 9.1 L10.6 3.4" fill="none" stroke="#333" stroke-width="1.4"/></svg>
<div class="lbl" style="left:903px;top:187px">Study accession</div>
<div class="cb" style="left:887px;top:210px"></div>
<div class="lbl" style="left:903px;top:210px">Sample accession</div>
<div class="cb" style="left:887px;top:233px"></div>
<svg class="a" style="left:887px;top:233px" width="13" height="13" viewBox="0 0 13 13"><path d="M2.2 6.4 L4.9 9.1 L10.6 3.4" fill="none" stroke="#333" stroke-width="1.4"/></svg>
<div class="lbl" style="left:903px;top:233px">Scientific name</div>
<div class="cb" style="left:887px;top:256px"></div>
<svg class="a" style="left:887px;top:256px" width="13" height="13" viewBox="0 0 13 13"><path d="M2.2 6.4 L4.9 9.1 L10.6 3.4" fill="none" stroke="#333" stroke-width="1.4"/></svg>
<div class="lbl" style="left:903px;top:256px">Download size (MB)</div>
<div class="cb" style="left:887px;top:279px"></div>
<svg class="a" style="left:887px;top:279px" width="13" height="13" viewBox="0 0 13 13"><path d="M2.2 6.4 L4.9 9.1 L10.6 3.4" fill="none" stroke="#333" stroke-width="1.4"/></svg>
<div class="lbl" style="left:903px;top:279px">Paired</div>
<div class="cb" style="left:887px;top:302px"></div>
<div class="lbl" style="left:903px;top:302px">Biological reads</div>
<div class="cb" style="left:887px;top:325px"></div>
<div class="lbl" style="left:903px;top:325px">Technical reads</div>
<div class="cb" style="left:887px;top:348px"></div>
<svg class="a" style="left:887px;top:348px" width="13" height="13" viewBox="0 0 13 13"><path d="M2.2 6.4 L4.9 9.1 L10.6 3.4" fill="none" stroke="#333" stroke-width="1.4"/></svg>
<div class="lbl" style="left:903px;top:348px">Read orientation</div>
<div class="cb" style="left:887px;top:371px"></div>
<svg class="a" style="left:887px;top:371px" width="13" height="13" viewBox="0 0 13 13"><path d="M2.2 6.4 L4.9 9.1 L10.6 3.4" fill="none" stroke="#333" stroke-width="1.4"/></svg>
<div class="lbl" style="left:903px;top:371px">Average length</div>
<div class="cb" style="left:887px;top:394px"></div>
<svg class="a" style="left:887px;top:394px" width="13" height="13" viewBox="0 0 13 13"><path d="M2.2 6.4 L4.9 9.1 L10.6 3.4" fill="none" stroke="#333" stroke-width="1.4"/></svg>
<div class="lbl" style="left:903px;top:394px">Spots</div>
<div class="cb" style="left:887px;top:417px"></div>
<div class="lbl" style="left:903px;top:417px">Insert size</div>
<div class="cb" style="left:887px;top:440px"></div>
<div class="lbl" style="left:903px;top:440px">Insert deviation</div>
<div class="cb" style="left:887px;top:463px"></div>
<svg class="a" style="left:887px;top:463px" width="13" height="13" viewBox="0 0 13 13"><path d="M2.2 6.4 L4.9 9.1 L10.6 3.4" fill="none" stroke="#333" stroke-width="1.4"/></svg>
<div class="lbl" style="left:903px;top:463px">PubMed</div>
<div class="btn" style="left:882px;top:482px;width:131px;height:21px"><span style="top:3px">Select All</span></div>
<div class="btn" style="left:882px;top:505px;width:131px;height:21px"><span style="top:3px">Deselect All</span></div>
<div class="a" style="left:807px;top:530px;width:281px;height:4px;background:#dcdcdc;border-top:1px solid #b9b9b9"></div>
<div class="sh" style="top:534px"><div class="nm"><span>SRA Preview</span></div><div class="mn"></div></div>
<div class="a" style="left:807px;top:551px;width:281px;height:137px;overflow:hidden">
<div class="t" style="left:5px;top:10px;font-size:12px;line-height:14px;letter-spacing:0.15px"><b>Title:</b></div>
<div class="t" style="left:5px;top:26px;font-size:12px;line-height:14px;letter-spacing:0.15px">sWGA of Plasmodium vivax from DBS</div>
<div class="t" style="left:5px;top:42px;font-size:12px;line-height:14px;letter-spacing:0.15px"><b>Abstract:</b></div>
<div class="t" style="left:5px;top:58px;font-size:12px;line-height:14px;letter-spacing:0.15px">Genetic surveillance tools are increasingly</div>
<div class="t" style="left:5px;top:74px;font-size:12px;line-height:14px;letter-spacing:0.15px">recognized for their potential to address specific</div>
<div class="t" style="left:5px;top:90px;font-size:12px;line-height:14px;letter-spacing:0.15px">elimination challenges for the malaria parasite</div>
<div class="t" style="left:5px;top:106px;font-size:12px;line-height:14px;letter-spacing:0.15px">Plasmodium vivax. To better support national</div>
<div class="t" style="left:5px;top:122px;font-size:12px;line-height:14px;letter-spacing:0.15px">malaria control program priorities, use cases</div>
</div>
<div class="a" style="left:1089px;top:46px;width:17px;height:642px;background:#f0f0f0"></div>
<div class="a" style="left:1090px;top:60px;width:15px;height:342px;background:#cdcdcd"></div>
<svg class="a" style="left:1093px;top:48px" width="9" height="7" viewBox="0 0 9 7"><path d="M1 6 L4.5 2.2 L8 6" fill="none" stroke="#4a4a4a" stroke-width="1.9"/></svg>
<svg class="a" style="left:1093px;top:676px" width="9" height="7" viewBox="0 0 9 7"><path d="M1 1.5 L4.5 5 L8 1.5" fill="none" stroke="#4a4a4a" stroke-width="1.9"/></svg>
<div class="a" style="left:809px;top:696px;width:11px;height:3px;border:1px solid #808080;background:#ececec"></div>
<svg class="a" style="left:826px;top:692px" width="12" height="12" viewBox="0 0 12 12"><path d="M0.5 1.5 H5.5 L6.5 2.5 H10.5 V10.5 H0.5 Z" fill="none" stroke="#707070" stroke-width="1"/></svg>
<svg class="a" style="left:843px;top:691px" width="13" height="14" viewBox="0 0 13 14"><path d="M1 4.5 H8 M6 2 L8.5 4.5 L6 7 M1.5 7 V10.5 H8 M6 8 L8.5 10.5 L6 13" fill="none" stroke="#c4c4c4" stroke-width="1"/><rect x="9" y="1" width="2" height="12" fill="#c4c4c4"/></svg>
<div class="btn" style="left:892px;top:689px;width:98px;height:18px"><span style="top:2px">Help</span></div>
<div class="btn" style="left:1002px;top:689px;width:98px;height:18px"><span style="top:2px">Save View...</span></div>
<div class="a" style="left:1109px;top:24px;width:1px;height:1px;background:#333"></div>
<div class="a" style="left:1109px;top:88px;width:1px;height:1px;background:#555"></div>
<div class="a" style="left:1109px;top:95px;width:1px;height:1px;background:#555"></div>
<div class="a" style="left:1108px;top:432px;width:2px;height:11px;background:#1e90e0"></div>
</body></html>
